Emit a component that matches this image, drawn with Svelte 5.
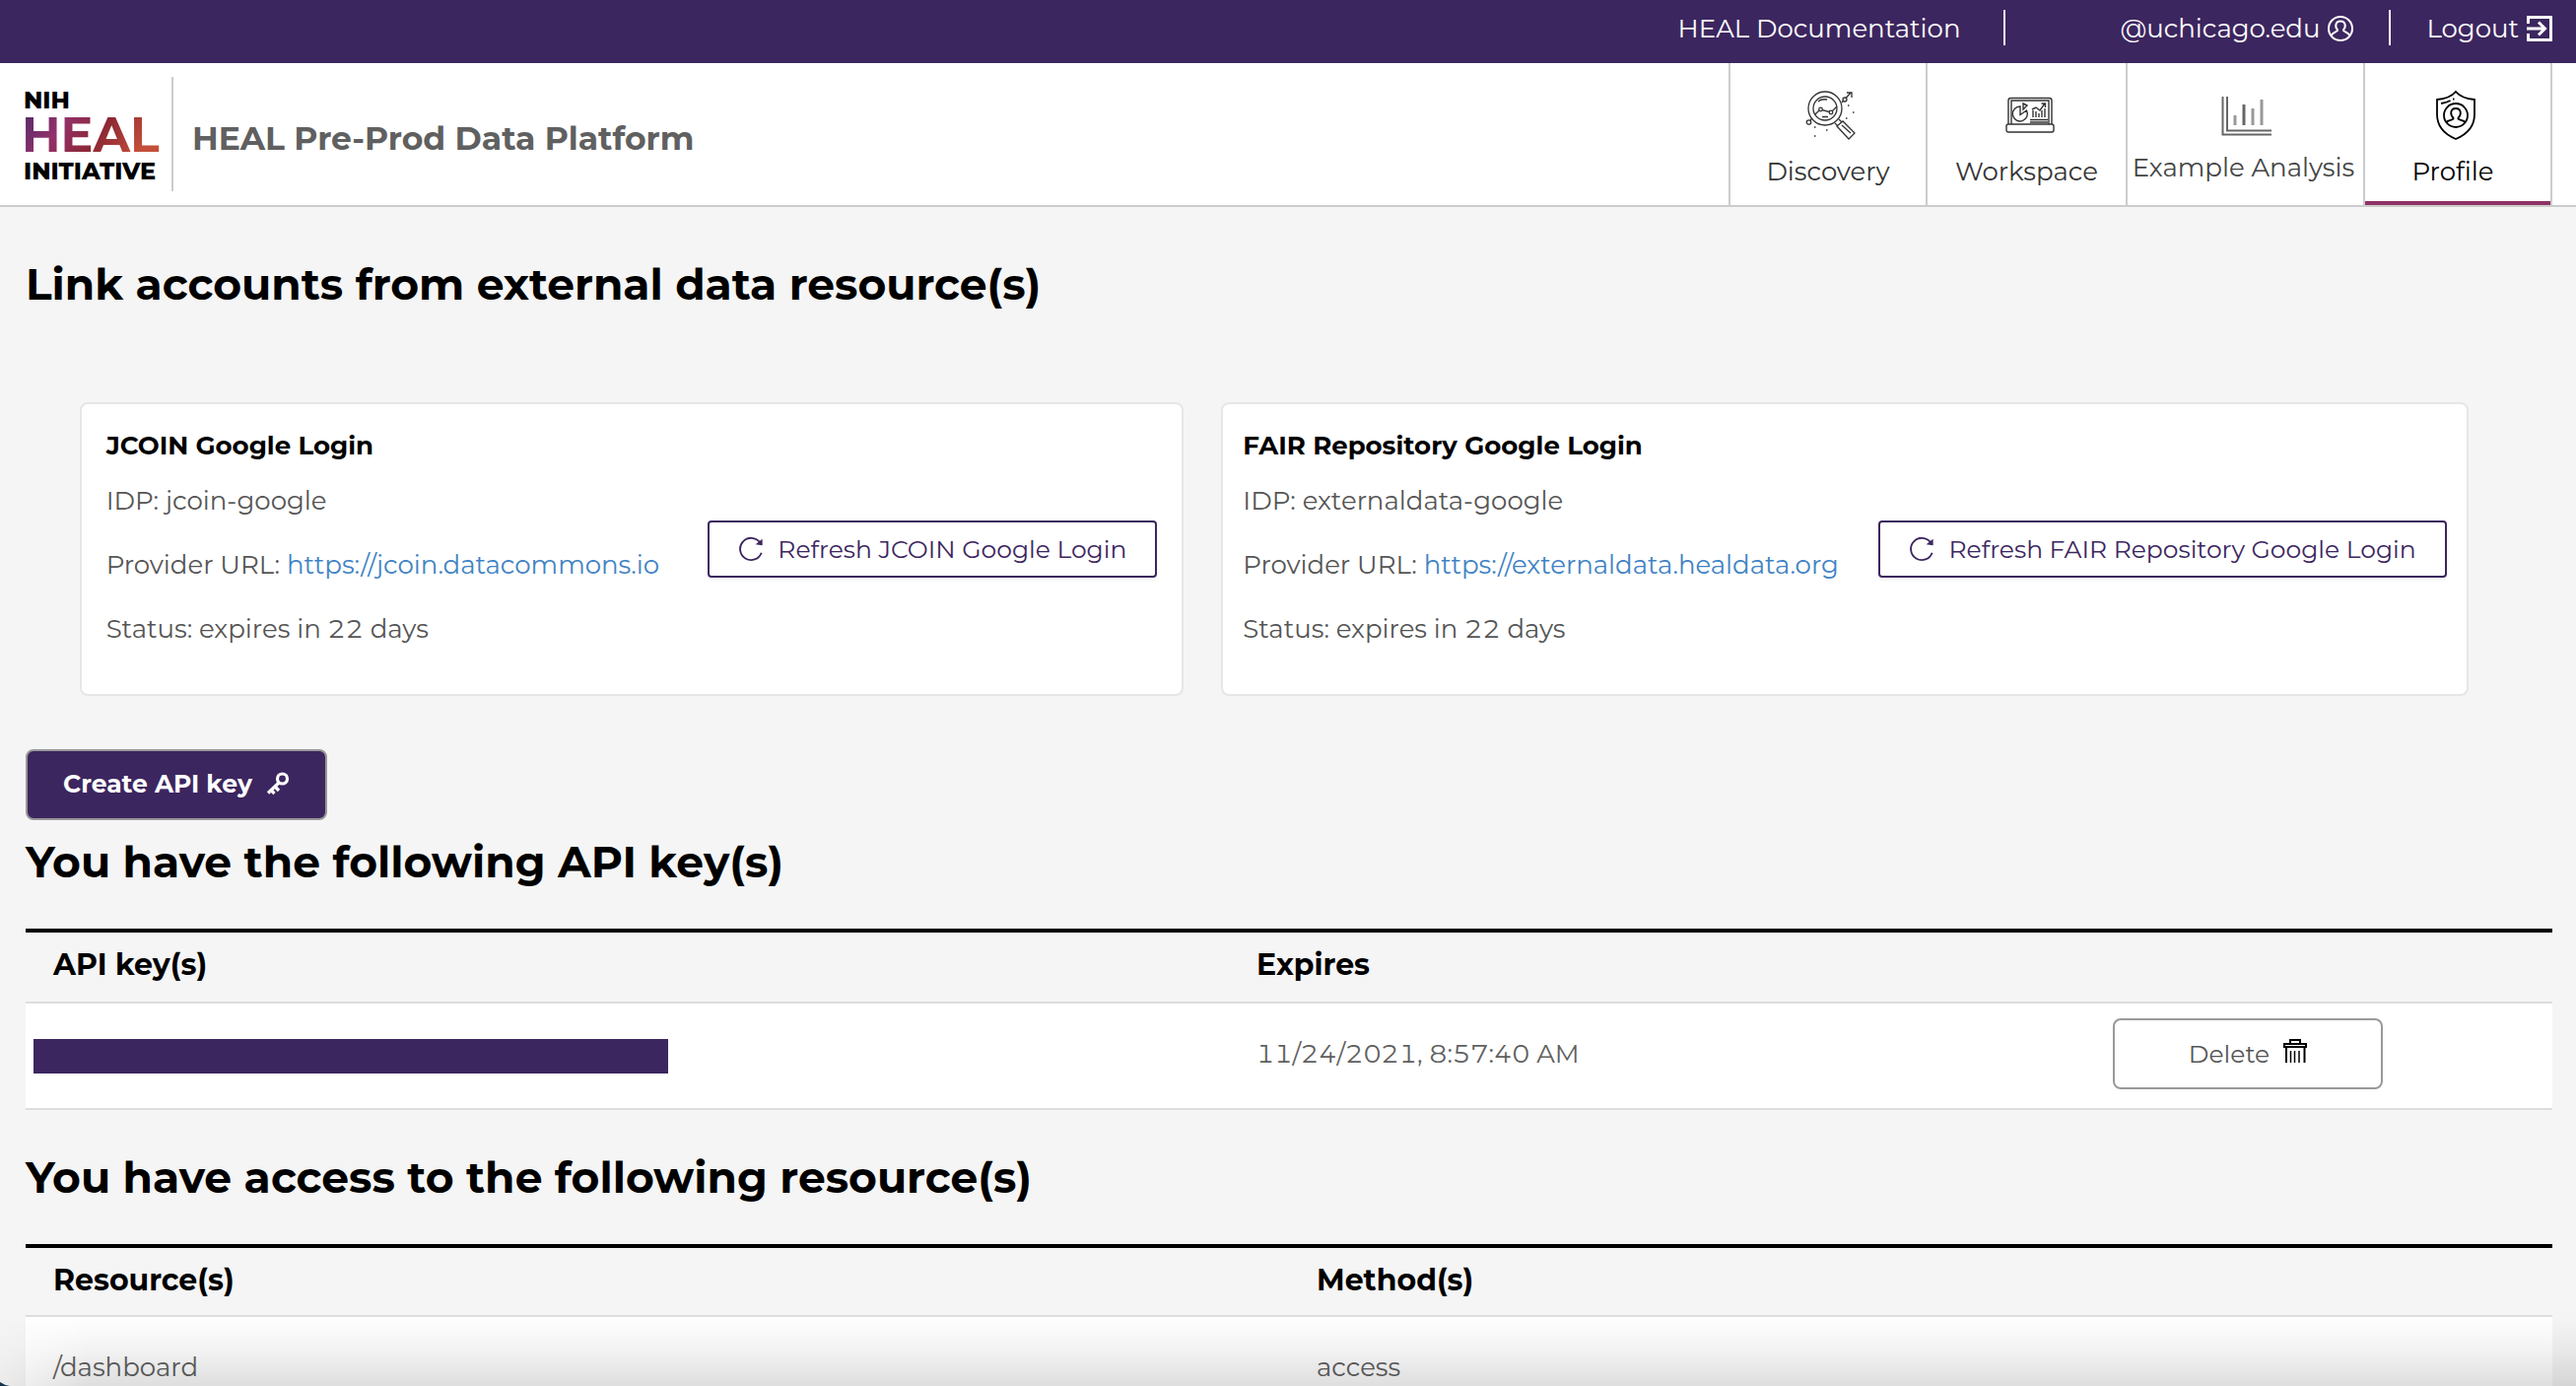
<script>
  const accounts = [
    { name: 'JCOIN Google Login', idp: 'jcoin-google', url: 'https://jcoin.datacommons.io', status: 'expires in 22 days' },
    { name: 'FAIR Repository Google Login', idp: 'externaldata-google', url: 'https://externaldata.healdata.org', status: 'expires in 22 days' }
  ];
  const keys = [{ id: 'Hidden key', expires: '11/24/2021, 8:57:40 AM' }];
  const resources = [{ path: '/dashboard', method: 'access' }];
</script>

<div class="page">
  <div class="topbar">
    <a class="top-item" href="#docs">HEAL Documentation</a>
    <a class="top-item user" href="#user">@uchicago.edu
      <svg width="26" height="26" viewBox="0 0 26 26" fill="none" stroke="currentColor" stroke-width="2" aria-hidden="true">
        <circle cx="13" cy="13" r="12" />
        <path d="M10.5 14.5C7 12 7.500 5.500 13 5.500S19 12 15.500 14.500M10.500 14.500C9 16.500 6 16.500 3.500 20M15.500 14.500C17 16.500 20 16.500 22.500 20" />
      </svg>
    </a>
    <a class="top-item" href="#logout">Logout
      <svg width="26" height="26" viewBox="0 0 26 26" fill="none" stroke="currentColor" stroke-width="3" aria-hidden="true">
        <path d="M1.500 8V1.500H24.500V24.500H1.500V18" />
        <path d="M0 13H18M12 6.500L18.500 13L12 19.500" />
      </svg>
    </a>
  </div>

  <header class="header">
    <a class="logo" href="#home" aria-label="NIH HEAL Initiative">
      <svg width="136" height="92" viewBox="0 0 136 92" aria-hidden="true">
        <defs>
          <linearGradient id="heal" x1="0" y1="0" x2="1" y2="0.3">
            <stop offset="0" stop-color="#4b2a68" />
            <stop offset="0.35" stop-color="#93316b" />
            <stop offset="0.65" stop-color="#8c2735" />
            <stop offset="1" stop-color="#c44f3a" />
          </linearGradient>
        </defs>
        <text class="logo-small" x="-2" y="20">NIH</text>
        <text class="logo-big" x="-4" y="64" fill="url(#heal)">HEAL</text>
        <text class="logo-small" x="-2" y="92">INITIATIVE</text>
      </svg>
    </a>
    <div class="title">HEAL Pre-Prod Data Platform</div>
    <nav class="nav">
      <a class="nav-item discovery" href="#discovery">
        <svg width="52" height="50" viewBox="0 0 52 50" fill="none" stroke="currentColor" stroke-width="1.300" aria-hidden="true">
          <circle cx="20" cy="18" r="17" /><circle cx="20" cy="18" r="12" />
          <path d="M10 24L15 19L26 22L32 16M13 11Q16 8 22 9M17 26.500h6M37 12L46 2M42 2h5v5" />
          <circle cx="15.500" cy="19" r="1.800" fill="#fff" /><circle cx="26" cy="22" r="1.800" fill="#fff" />
          <circle cx="40" cy="9" r="2" fill="#fff" /><circle cx="3.500" cy="32" r="2.200" /><path d="M5 30L7 28" />
          <path d="M30 33L33 36M34 29L37 32M32 36L38 31L50 43L44 49ZM37 35L46 43" />
          <path d="M43 15h1.500M48 22h1.500M41 28h1.500M9 37h1.500M21 40h1.500M9 46h1.500" stroke-width="1.500" />
        </svg>
        <span>Discovery</span>
      </a>
      <a class="nav-item workspace" href="#workspace">
        <svg width="50" height="50" viewBox="0 0 50 50" fill="none" stroke="currentColor" stroke-width="1.400" aria-hidden="true">
          <path d="M3 34V10Q3 7.500 5.500 7.500H44.500Q47 7.500 47 10V34M6 34V10H44V34" />
          <rect x="1" y="34" width="48" height="8" rx="2" />
          <path d="M15 16A7.500 7.500 0 1 0 21.500 20L15 24.500Z" />
          <path d="M18 13L22 15L18 19Z" />
          <path d="M28 27V20M31 27V21M34 27V23M37 27V20M40 27V18M27 19L31 17L35 20L40 13M36.500 13H40.500V17M25 29.500H43M25 32H43" />
        </svg>
        <span>Workspace</span>
      </a>
      <a class="nav-item example" href="#analysis">
        <svg width="52" height="50" viewBox="0 0 52 50" fill="none" aria-hidden="true">
          <path d="M1.500 6V44.500H51M6 6V40.500H51" stroke="#666" stroke-width="2" />
          <path d="M14 25V35M32 18V35M41 9V35" stroke="#999" stroke-width="3" />
          <path d="M23 14V35" stroke="#666" stroke-width="3" />
        </svg>
        <span>Example Analysis</span>
      </a>
      <a class="nav-item profile" href="#profile" aria-current="page">
        <svg width="42" height="50" viewBox="0 0 42 50" fill="none" stroke="currentColor" stroke-width="1.800" aria-hidden="true">
          <path d="M21 1Q15 8 2 9V24Q2 41 21 49Q40 41 40 24V9Q27 8 21 1Z" />
          <circle cx="21" cy="25" r="12" />
          <path d="M19 28C15 25 15 18 21 18S27 25 23 28M19 28C18 30 14 29.500 11 32M23 28C24 30 28 29.500 31 32M6 13Q12 12 15.500 10M18 8.500h1.500" />
        </svg>
        <span>Profile</span>
      </a>
    </nav>
  </header>

  <main>
    <h1>Link accounts from external data resource(s)</h1>
    <div class="cards">
      {#each accounts as a}
        <section class="card">
          <div class="details">
            <h2>{a.name}</h2>
            <p>IDP: {a.idp}</p>
            <p>Provider URL: <a href={a.url}>{a.url}</a></p>
            <p>Status: {a.status}</p>
          </div>
          <button class="refresh" type="button">
            <svg width="26" height="26" viewBox="0 0 28 28" fill="none" stroke="currentColor" stroke-width="2" aria-hidden="true">
              <path d="M25.500 18A12 12 0 1 1 24 7" />
              <path d="M26.500 3V10L19 9Z" fill="currentColor" stroke="none" />
            </svg>
            Refresh {a.name}
          </button>
        </section>
      {/each}
    </div>

    <button class="create" type="button">
      Create API key
      <svg width="24" height="24" viewBox="0 0 24 24" fill="none" stroke="currentColor" aria-hidden="true">
        <circle cx="16.500" cy="7" r="5" stroke-width="3.200" />
        <path d="M13 11L2 21.500M9 15L13 19M5 18.500L8.500 22" stroke-width="3.200" />
      </svg>
    </button>

    <h1>You have the following API key(s)</h1>
    <table class="keys">
      <thead><tr><th>API key(s)</th><th>Expires</th><th aria-label="Actions"></th></tr></thead>
      <tbody>
        {#each keys as k}
          <tr>
            <td class="key"><div class="redacted" role="img" aria-label={k.id}></div></td>
            <td>{k.expires}</td>
            <td class="action">
              <button class="delete" type="button">
                Delete
                <svg width="24" height="24" viewBox="0 0 24 24" fill="none" stroke="currentColor" stroke-width="2" aria-hidden="true">
                  <path d="M7 4V1H17V4M1 8V5H23V8ZM3 8V24M21.500 8V24" />
                  <path d="M7.500 12V24M11.500 12V24M16 12V24" stroke-width="1.500" />
                </svg>
              </button>
            </td>
          </tr>
        {/each}
      </tbody>
    </table>

    <h1>You have access to the following resource(s)</h1>
    <table class="resources">
      <thead><tr><th>Resource(s)</th><th>Method(s)</th></tr></thead>
      <tbody>
        {#each resources as r}
          <tr><td>{r.path}</td><td>{r.method}</td></tr>
        {/each}
      </tbody>
    </table>
  </main>
  <div class="shade"></div>
  <svg class="corner" width="10" height="4" viewBox="0 0 10 4" aria-hidden="true"><path d="M0 0Q4 3 10 4H0Z" fill="#16344c" /></svg>
</div>

<style>
  :global(body) { margin: 0; background: #f5f5f5; }
  .page {
    position: relative;
    height: 100vh;
    overflow: hidden;
    background: #f5f5f5;
    color: #555;
    font-family: Montserrat, Inter, sans-serif;
    font-size: 26px;
    line-height: 32px;
    font-variant-numeric: tabular-nums;
  }
  .page * { box-sizing: border-box; }
  a { color: inherit; text-decoration: none; }
  button { font: inherit; font-size: 25px; cursor: pointer; display: flex; align-items: center; justify-content: center; white-space: nowrap; }
  svg { display: block; flex: none; overflow: visible; }

  .topbar { display: flex; justify-content: flex-end; height: 64px; padding: 10px 24px 0 0; background: #3c265f; color: #fff; }
  .top-item { display: flex; gap: 8px; height: 36px; padding: 2px 36px 0 38px; align-items: center; border-left: 2px solid #fff; }
  .top-item:first-child { border-left: 0; padding-right: 44px; }
  .top-item:last-child { padding-right: 0; padding-left: 36px; }
  .user { padding-left: 116px; }

  .header { display: flex; align-items: center; height: 146px; padding: 0 24px 0 26px; background: #fff; border-bottom: 2px solid #ccc; }
  .logo { padding: 12px 12px 12px 0; border-right: 2px solid #ccc; }
  .logo-small { font-size: 24px; font-weight: 800; fill: #000; }
  .logo-big { font-size: 49px; font-weight: 700; }
  .title { margin-left: 19px; padding-top: 8px; font-size: 33px; line-height: 40px; font-weight: 700; color: #606060; }
  .nav { display: flex; align-self: stretch; margin-left: auto; border-right: 2px solid #ccc; }
  .nav-item { display: flex; flex-direction: column; align-items: center; gap: 16px; padding-top: 28px; border-left: 2px solid #ccc; color: #333; }
  .nav-item svg { margin-left: 6px; }
  .discovery { width: 200px; }
  .workspace { width: 203px; }
  .example { width: 241px; gap: 12px; padding-right: 4px; white-space: nowrap; color: #444; }
  .profile { width: 190px; padding-right: 10px; color: #000; box-shadow: inset 0 -4px #8f3268; }

  main { padding: 0 24px 0 26px; }
  h1 { margin: 0; font-size: 44px; line-height: 52px; font-weight: 700; color: #000; }
  main > h1:first-child { padding-top: 52px; }
  .cards { display: grid; grid-template-columns: 1120fr 1266fr; gap: 38px; margin: 94px 85px 54px 55px; }
  .card { display: flex; justify-content: space-around; align-items: center; height: 298px; background: #fff; border: 2px solid #e6e6e6; border-radius: 8px; }
  .details { align-self: flex-start; padding-top: 26px; }
  h2 { margin: 0 0 24px; font-size: 26px; line-height: 32px; font-weight: 700; color: #000; }
  p { margin: 0 0 33px; }
  p a { color: #4183c4; }
  .refresh { gap: 14px; height: 58px; padding: 0 29px; color: #3c265f; background: #fff; border: 2px solid #3c265f; border-radius: 4px; box-shadow: 0 4px 0 rgba(0, 0, 0, 0.02); }

  .create { gap: 14px; height: 72px; width: 306px; padding: 0 0 2px; color: #fff; background: #3c265f; border: 2px solid #999; border-radius: 8px; font-weight: 700; }
  .create + h1 { padding-top: 16px; }

  table { width: 100%; border-collapse: separate; border-spacing: 0; table-layout: fixed; margin-top: 42px; border-top: 4px solid #000; }
  th { height: 72px; padding: 0 28px 4px; text-align: left; font-size: 30px; line-height: 36px; font-weight: 700; color: #000; border-bottom: 2px solid #ddd; }
  td { height: 108px; padding: 0 28px 4px; background: #fff; border-bottom: 2px solid #ddd; color: #606060; }
  .keys { margin-bottom: 42px; }
  .keys th:first-child { width: 1221px; }
  .keys th:last-child { width: 474px; }
  .resources th { height: 70px; padding-bottom: 2px; }
  .keys .key { padding: 0 8px; }
  .redacted { width: 644px; height: 35px; background: #3c265f; }
  .delete { gap: 14px; width: 274px; height: 72px; padding: 0; background: #fff; border: 2px solid #999; border-radius: 8px; color: #555; }
  .delete svg { color: #000; margin-bottom: 6px; }
  .shade {
    position: absolute; left: 0; right: 0; bottom: 0; height: 70px; pointer-events: none;
    background: linear-gradient(to bottom, transparent, rgba(0, 0, 0, 0.05) 50%, rgba(0, 0, 0, 0.13));
    mask-image: linear-gradient(to right, rgba(0, 0, 0, 0.3), #000 90px);
  }
  .corner { position: absolute; left: 0; bottom: 0; }
</style>
